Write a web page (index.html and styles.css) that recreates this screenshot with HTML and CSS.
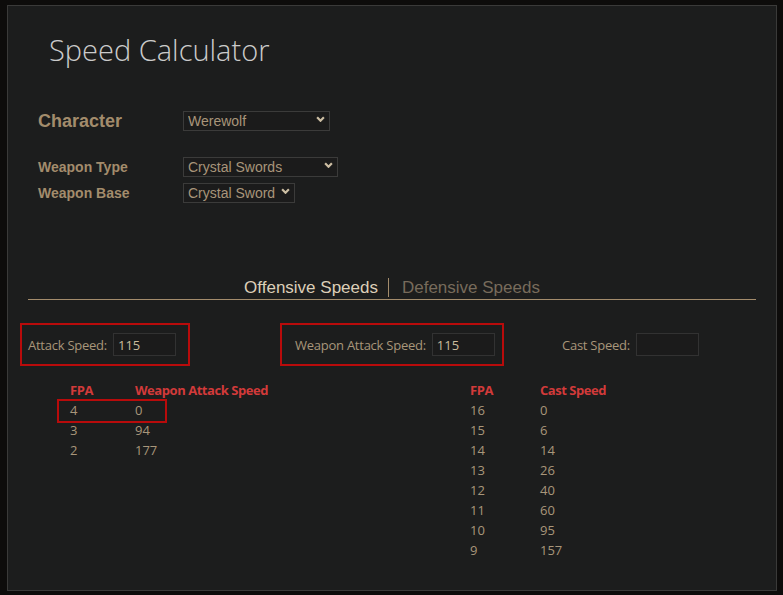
FILE: index.html
```html
<!DOCTYPE html>
<html lang="en">
<head>
<meta charset="utf-8">
<title>Speed Calculator</title>
<link rel="stylesheet" href="styles.css">
</head>
<body>
<div class="panel">
  <h1 class="title">Speed Calculator</h1>

  <div class="form">
    <label class="lbl lbl-big">Character</label>
    <span class="sel sel-char"><select><option>Werewolf</option></select><svg class="chev" viewBox="0 0 8 5"><polyline points="1,1 4,4 7,1"/></svg></span>

    <label class="lbl lbl-gap">Weapon Type</label>
    <span class="sel sel-type sel-gap"><select><option>Crystal Swords</option></select><svg class="chev" viewBox="0 0 8 5"><polyline points="1,1 4,4 7,1"/></svg></span>

    <label class="lbl">Weapon Base</label>
    <span class="sel sel-base"><select><option>Crystal Sword</option></select><svg class="chev" viewBox="0 0 8 5"><polyline points="1,1 4,4 7,1"/></svg></span>
  </div>

  <div class="tabs">
    <span class="tab active">Offensive Speeds</span>
    <span class="tab">Defensive Speeds</span>
  </div>

  <div class="speeds">
    <div class="field boxed box-as">
      <span class="flabel">Attack Speed:</span>
      <input class="num num-as" value="115">
    </div>
    <div class="field boxed box-was">
      <span class="flabel">Weapon Attack Speed:</span>
      <input class="num" value="115">
    </div>
    <div class="field cast">
      <span class="flabel">Cast Speed:</span>
      <input class="num" value="">
    </div>
  </div>

  <div class="tables">
    <table class="bp bp-left">
      <tr><th class="c1">FPA</th><th>Weapon Attack Speed</th></tr>
      <tr class="hit"><td class="c1">4</td><td>0</td></tr>
      <tr><td class="c1">3</td><td>94</td></tr>
      <tr><td class="c1">2</td><td>177</td></tr>
    </table>
    <table class="bp bp-right">
      <tr><th class="c1">FPA</th><th>Cast Speed</th></tr>
      <tr><td class="c1">16</td><td>0</td></tr>
      <tr><td class="c1">15</td><td>6</td></tr>
      <tr><td class="c1">14</td><td>14</td></tr>
      <tr><td class="c1">13</td><td>26</td></tr>
      <tr><td class="c1">12</td><td>40</td></tr>
      <tr><td class="c1">11</td><td>60</td></tr>
      <tr><td class="c1">10</td><td>95</td></tr>
      <tr><td class="c1">9</td><td>157</td></tr>
    </table>
  </div>
</div>
</body>
</html>
```

FILE: styles.css
```css
html, body {
  margin: 0;
  padding: 0;
  background: #0d0c0b;
}
body {
  padding: 5px 0 0 7px;
  font-family: "Open Sans", "Noto Sans", sans-serif;
}
.panel {
  box-sizing: border-box;
  width: 770px;
  height: 586px;
  border: 1px solid #3a3a39;
  background: #1c1d1d;
}
.title {
  margin: 24px 0 0 41px;
  font-family: "Open Sans", sans-serif;
  font-weight: 300;
  font-size: 29px;
  line-height: 40px;
  color: #cbcbcb;
}
.form {
  display: grid;
  grid-template-columns: 145px auto;
  justify-content: start;
  align-items: center;
  row-gap: 6px;
  margin: 39px 0 0 30px;
}
.lbl {
  font-family: "Liberation Sans", Arial, sans-serif;
  font-weight: bold;
  font-size: 14px;
  color: #a38c6c;
  line-height: 24px;
  margin-bottom: -4px;
}
.lbl-big {
  font-size: 18px;
}
.lbl-gap,
.sel-gap {
  margin-top: 20px;
}
.sel {
  position: relative;
  display: inline-block;
  justify-self: start;
  height: 20px;
}
.sel select {
  appearance: none;
  -webkit-appearance: none;
  box-sizing: border-box;
  height: 20px;
  margin: 0;
  padding: 0 0 0 4px;
  border: 1px solid #3b3b3a;
  border-radius: 0;
  background: #1b1b1b;
  color: #a8957a;
  font-family: "Liberation Sans", Arial, sans-serif;
  font-size: 14px;
  line-height: 18px;
  outline: none;
}
.sel-char select { width: 147px; }
.sel-type select { width: 155px; }
.sel-base select { width: 112px; }
.chev {
  position: absolute;
  right: 5px;
  top: 7px;
  width: 9px;
  height: 6px;
  pointer-events: none;
}
.chev polyline {
  fill: none;
  stroke: #cdbfa4;
  stroke-width: 2;
}
.tabs {
  display: flex;
  justify-content: center;
  margin: 75px 20px 0;
  padding-top: 1px;
  border-bottom: 1px solid #a38c6c;
  font-family: "Liberation Sans", Arial, sans-serif;
  font-size: 17px;
  line-height: 22px;
}
.tab {
  color: #776b5b;
}
.tab.active {
  color: #dccfb8;
  padding-right: 11px;
}
.tab + .tab {
  padding-left: 13px;
  margin-left: -1px;
  border-left: 1px solid #a38c6c;
  line-height: 19px;
  margin-top: 1px;
  margin-bottom: 2px;
}
.speeds {
  display: flex;
  align-items: center;
  margin: 23px 0 0 12px;
}
.field {
  display: flex;
  align-items: center;
  box-sizing: border-box;
  height: 43px;
  font-size: 13px;
  color: #a8967a;
}
.boxed {
  border: 2px solid #b80b0b;
}
.box-as {
  width: 170px;
  padding-left: 6px;
}
.box-was {
  width: 224px;
  margin-left: 90px;
  padding-left: 13px;
}
.cast {
  margin-left: 58px;
}
.flabel {
  margin-right: 6px;
  letter-spacing: -0.25px;
}
.num {
  box-sizing: border-box;
  width: 63px;
  height: 23px;
  margin: 0;
  padding: 0 4px;
  border: 1px solid #323232;
  background: #1b1b1b;
  color: #cbbb9c;
  font-family: "Open Sans", sans-serif;
  font-size: 13px;
  outline: none;
}
.tables {
  display: flex;
  align-items: flex-start;
  margin: 14px 0 0 62px;
}
.bp {
  border-collapse: collapse;
  font-size: 13px;
  line-height: 20px;
  color: #a8967a;
}
.bp-left { width: 400px; }
.bp td, .bp th {
  padding: 0;
  text-align: left;
  white-space: nowrap;
}
.bp th {
  font-weight: bold;
  color: #d23a3a;
  letter-spacing: -0.45px;
}
.bp-left .c1 { width: 65px; }
.bp-right .c1 { width: 70px; }
.bp-left th:last-child, .bp-left td:last-child { width: 335px; }
.hit .c1 {
  position: relative;
}
.hit .c1::after {
  content: "";
  position: absolute;
  left: -13px;
  top: -1px;
  width: 110px;
  height: 24px;
  box-sizing: border-box;
  border: 2px solid #b80b0b;
}
```
